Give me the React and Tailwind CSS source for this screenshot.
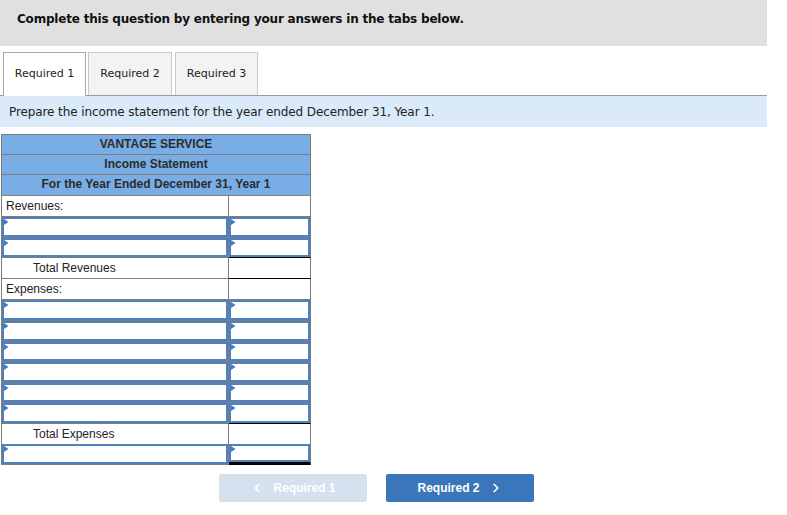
import { ChevronLeft, ChevronRight } from "lucide-react";

const Marker = () => (
  <svg className="absolute left-0 top-0" width="5" height="6" viewBox="0 0 5 6">
    <path d="M0 0 L4.5 3 L0 6 Z" fill="#3f7cc9" />
  </svg>
);

const InputBox = () => (
  <div className="relative h-full border-2 border-[#4f80c0] bg-white">
    <Marker />
  </div>
);

// one row of the statement: left label cell + right amount cell
const Row = ({ h, label, indent, input, rightCls }) => (
  <div className={`grid grid-cols-[227px_82px] ${h}`}>
    <div className="border-r border-b border-[#7c7c7c]">
      {input ? (
        <InputBox />
      ) : (
        <div className={`pt-[1px] leading-[19px] text-[12px] text-[#222] ${indent ? "pl-[31px]" : "pl-[4px]"}`}>{label}</div>
      )}
    </div>
    <div className={`border-r border-b border-[#7c7c7c] ${rightCls || ""}`}>
      {input && <InputBox />}
    </div>
  </div>
);

const HeadRow = ({ h, children }) => (
  <div className={`${h} border-r border-b border-[#7c7c7c] bg-[#79ade5] text-center font-bold text-[12px] text-[#2c2c2c] leading-[19px]`}>
    {children}
  </div>
);

export default function App() {
  return (
    <div className="w-[767px] bg-white" style={{ fontFamily: "'Liberation Sans', Arial, sans-serif" }}>
      <div className="h-[46px] bg-[#e0e0e0] pl-[17px] pt-[6px]" style={{ fontFamily: "'DejaVu Sans', Verdana, sans-serif" }}>
        <span className="font-bold text-[12px] tracking-[-0.2px] text-[#111]">Complete this question by entering your answers in the tabs below.</span>
      </div>

      <div className="mt-[6px] flex pl-[3px] text-[11px] text-[#222]" style={{ fontFamily: "'DejaVu Sans', Verdana, sans-serif" }}>
        <div className="relative z-10 -mb-px flex h-[44px] w-[83px] items-center justify-center border border-b-0 border-[#a9a9a9] bg-white">Required 1</div>
        <div className="ml-[2px] flex h-[43px] w-[84px] items-center justify-center border border-b-0 border-[#c9c9c9] bg-[#f3f3f3]">Required 2</div>
        <div className="ml-[3px] flex h-[43px] w-[83px] items-center justify-center border border-b-0 border-[#c9c9c9] bg-[#f3f3f3]">Required 3</div>
      </div>

      <div className="flex h-[32px] items-center border-t border-[#9b9b9b] bg-[#daeaf8] pl-[9px] pt-[1px] text-[12px] tracking-[-0.1px] text-[#222]" style={{ fontFamily: "'DejaVu Sans', Verdana, sans-serif" }}>
        Prepare the income statement for the year ended December 31, Year 1.
      </div>

      <div className="ml-[1px] mt-[7px] w-[310px] border-l border-t border-[#7c7c7c]">
        <HeadRow h="h-[20px]">VANTAGE SERVICE</HeadRow>
        <HeadRow h="h-[20px]">Income Statement</HeadRow>
        <HeadRow h="h-[21px]">For the Year Ended December 31, Year 1</HeadRow>
        <Row h="h-[21px]" label="Revenues:" />
        <Row h="h-[21px]" input />
        <Row h="h-[20px]" input rightCls="border-b-black" />
        <Row h="h-[21px]" label="Total Revenues" indent rightCls="border-b-black" />
        <Row h="h-[21px]" label="Expenses:" />
        <Row h="h-[21px]" input />
        <Row h="h-[21px]" input />
        <Row h="h-[20px]" input />
        <Row h="h-[21px]" input />
        <Row h="h-[20px]" input />
        <Row h="h-[21px]" input rightCls="border-b-black" />
        <Row h="h-[20px]" label="Total Expenses" indent rightCls="border-b-black" />
        <Row h="h-[21px]" input rightCls="border-b-[3px] border-b-black" />
      </div>

      <div className="mt-[9px] flex gap-[19px] pl-[219px] pb-[13px]">
        <div className="flex h-[28px] w-[148px] items-center justify-center gap-[9px] rounded-[2px] bg-[#d6e1ef] text-[12px] font-bold text-white">
          <ChevronLeft size={14} strokeWidth={3} />
          <span>Required 1</span>
        </div>
        <div className="flex h-[28px] w-[148px] items-center justify-center gap-[9px] rounded-[2px] bg-[#3a76b9] text-[12px] font-bold text-white">
          <span>Required 2</span>
          <ChevronRight size={14} strokeWidth={3} />
        </div>
      </div>
    </div>
  );
}
